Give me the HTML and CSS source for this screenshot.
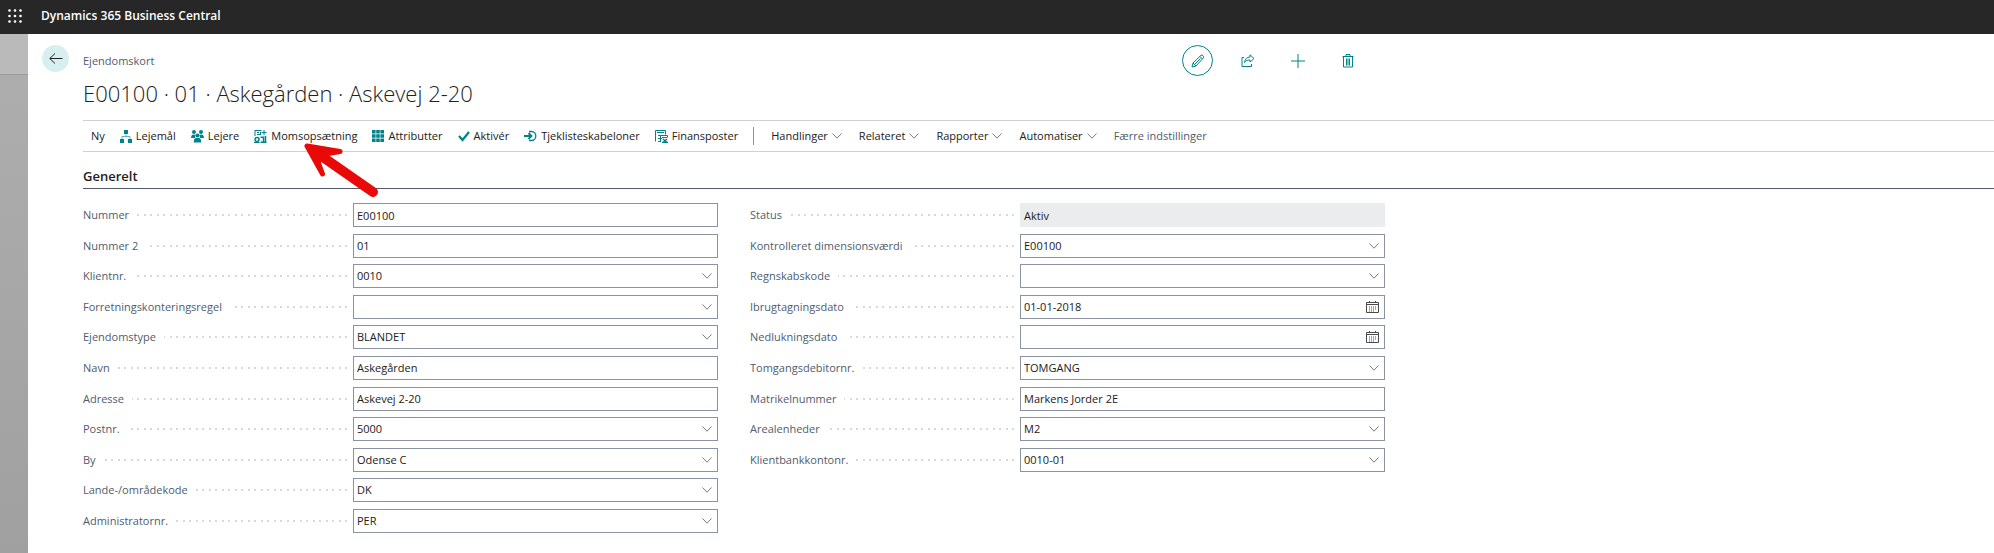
FILE: index.html
```html
<!DOCTYPE html>
<html lang="da">
   <head>
      <meta charset="UTF-8">
      <meta name="viewport" content="width=device-width, initial-scale=1.0"/>
      <title>Ejendomskort - Dynamics 365 Business Central</title>
      <link rel="stylesheet" href="styles.css">
   </head>
   <body>
      <!-- Shared icons -->
      <svg class="hidden">
         <symbol id="chevron" viewBox="0 0 10 6"><path d="M.5.5 5 5.2 9.500.5" fill="none" stroke="currentColor"/></symbol>
         <symbol id="calendar" viewBox="0 0 13 12">
            <path d="M.5 1.500h12v10H.5zM.5 3.500h12M3.500 0v2M9.500 0v2" fill="none" stroke="currentColor"/>
            <path d="M3 6h8M3 8h8M3 10h6" stroke="currentColor" stroke-dasharray="1 1" fill="none"/>
         </symbol>
      </svg>

      <header class="topbar">
         <button class="waffle" aria-label="Appstarter">
            <svg width="14" height="14" viewBox="0 0 14 14" fill="#fff">
               <circle cx="1.500" cy="1.500" r="1.300"/><circle cx="7" cy="1.500" r="1.300"/><circle cx="12.500" cy="1.500" r="1.300"/>
               <circle cx="1.500" cy="7" r="1.300"/><circle cx="7" cy="7" r="1.300"/><circle cx="12.500" cy="7" r="1.300"/>
               <circle cx="1.500" cy="12.500" r="1.300"/><circle cx="7" cy="12.500" r="1.300"/><circle cx="12.500" cy="12.500" r="1.300"/>
            </svg>
         </button>
         <span class="product">Dynamics 365 Business Central</span>
      </header>

      <main class="sheet">
         <button class="back" aria-label="Tilbage">
            <svg width="14" height="12" viewBox="0 0 14 12"><path d="M6 .5.8 5.500 6 10.500M.8 5.500H13.500" fill="none" stroke="#212121"/></svg>
         </button>

         <div class="card">
            <div class="card-head">
               <span class="caption">Ejendomskort</span>
               <div class="card-actions">
                  <button class="edit" aria-label="Rediger">
                     <svg width="14" height="14" viewBox="0 0 14 14" fill="none" stroke="currentColor">
                        <path d="M1 13l1-4L10 1.300c1-1 3.500 1.200 2.500 2.500L5 12zM2 9l3 3M9 2.500l2.500 2.500M3.500 10.500l6-6"/>
                     </svg>
                  </button>
                  <button aria-label="Del">
                     <svg width="14" height="13" viewBox="0 0 14 13" fill="none" stroke="currentColor">
                        <path d="M3 3.500H1v9h9.500V10M9 .8l4 3.700L9 8V6C6.500 6 5 6.500 3.500 8.500 4 5 6 3 9 3z"/>
                     </svg>
                  </button>
                  <button aria-label="Ny">
                     <svg width="14" height="14" viewBox="0 0 14 14" fill="none" stroke="currentColor"><path d="M7 0v14M0 7h14"/></svg>
                  </button>
                  <button aria-label="Slet">
                     <svg width="12" height="14" viewBox="0 0 12 14" fill="none" stroke="currentColor">
                        <path d="M.5 2.500h11M4 2V.5h4V2M1.500 3v10h9V3M4.500 4.500v7M6 4.500v7M7.500 4.500v7"/>
                     </svg>
                  </button>
               </div>
            </div>

            <h1>E00100 · 01 · Askegården · Askevej 2-20</h1>

            <nav class="toolbar">
               <div class="actions">
                  <button>Ny</button>
                  <button>
                     <svg width="12" height="13" viewBox="0 0 12 13" fill="currentColor"><path d="M4 0h4v4H4zM0 9h4v4H0zM8 9h4v4H8z"/><path d="M6 4v2.500M2 9V6.500h8V9" fill="none" stroke="currentColor" stroke-opacity=".6"/></svg>
                     Lejemål
                  </button>
                  <button>
                     <svg width="13" height="13" viewBox="0 0 13 13" fill="currentColor">
                        <circle cx="3" cy="2" r="2"/><circle cx="10" cy="2" r="2"/><circle cx="6.500" cy="5.500" r="2"/>
                        <path d="M0 8c0-4 3-4 4.500-3L4 8zM13 8c0-4-3-4-4.500-3L9 8zM2.800 12.500c0-5 2-4.500 3.700-4.500s3.700-.5 3.700 4.500z"/>
                     </svg>
                     Lejere
                  </button>
                  <button>
                     <svg width="13" height="13" viewBox="0 0 13 13" fill="none" stroke="currentColor">
                        <path d="M1 0v6M1 .5h6.500M3 2.500h2M3 4.500h3M6.500 2v3M10 0v5M7.500 2.500h5"/>
                        <circle cx="3" cy="9.500" r="2" stroke-width="1.500"/>
                        <path d="M0 12.500h5.500M3 7v1"/>
                        <path d="M6.500 7.200h3V12M6.500 12.200h6M11.500 6v6" stroke-width="1.500"/>
                     </svg>
                     Momsopsætning
                  </button>
                  <button>
                     <svg width="12" height="12" viewBox="0 0 12 12" fill="currentColor"><path d="M0 0h3.600v3.600H0zM4.200 0h3.600v3.600H4.200zM8.400 0H12v3.600H8.400zM0 4.200h3.600v3.600H0zM4.200 4.200h3.600v3.600H4.200zM8.400 4.200H12v3.600H8.400zM0 8.400h3.600V12H0zM4.200 8.400h3.600V12H4.200zM8.400 8.400H12V12H8.400z"/></svg>
                     Attributter
                  </button>
                  <button>
                     <svg width="12" height="12" viewBox="0 0 12 12" fill="none" stroke="currentColor" stroke-width="2.200"><path d="M1 6l3.500 4L11 2"/></svg>
                     Aktivér
                  </button>
                  <button>
                     <svg width="13" height="12" viewBox="0 0 13 12" fill="none" stroke="currentColor"><path d="M5 1.500h2.500a4.300 4.500 0 0 1 0 9H5" stroke-width="1.300"/><path d="M0 6h7M4.500 3l3 3-3 3" stroke-width="1.800"/></svg>
                     Tjeklisteskabeloner
                  </button>
                  <button>
                     <svg width="13" height="13" viewBox="0 0 13 13" fill="none" stroke="currentColor"><path d="M.5 11.500V.5h10v4M2 2.500h7M3 5.500h9.500v2M5.500 5v6M3 11.500h3M3 8.500h4M7 7.500h5"/><path d="M8 9l4 3.500M12 9l-4 3.500M7 12.500h6" stroke-width="1.500"/></svg>
                     Finansposter
                  </button>
               </div>
               <span class="divider"></span>
               <div class="menus">
                  <button>Handlinger <svg class="chevron" width="10" height="6"><use href="#chevron"/></svg></button>
                  <button>Relateret <svg class="chevron" width="10" height="6"><use href="#chevron"/></svg></button>
                  <button>Rapporter <svg class="chevron" width="10" height="6"><use href="#chevron"/></svg></button>
                  <button>Automatiser <svg class="chevron" width="10" height="6"><use href="#chevron"/></svg></button>
                  <button class="fewer">Færre indstillinger</button>
               </div>

               <!-- Marker pointing at Momsopsætning -->
               <svg class="marker" width="76" height="58" viewBox="0 0 76 58" fill="#e90909" stroke="#e90909" stroke-linejoin="round" stroke-linecap="round">
                  <path d="M3 3 36 8.500 21 11 14 19 18.500 31z" stroke-width="5"/>
                  <path d="M18 13.500 69 49" stroke-width="10"/>
               </svg>
            </nav>

            <h2>Generelt</h2>

            <form class="fields" action="">
               <div class="column">
                  <div class="field">
                     <label for="nummer">Nummer</label>
                     <div class="control"><input type="text" id="nummer" value="E00100"/></div>
                  </div>
                  <div class="field">
                     <label for="nummer2">Nummer 2</label>
                     <div class="control"><input type="text" id="nummer2" value="01"/></div>
                  </div>
                  <div class="field">
                     <label for="klientnr">Klientnr.</label>
                     <div class="control"><select id="klientnr"><option>0010</option></select><svg class="chevron" width="10" height="6"><use href="#chevron"/></svg></div>
                  </div>
                  <div class="field">
                     <label for="regel">Forretningskonteringsregel</label>
                     <div class="control"><select id="regel"><option></option></select><svg class="chevron" width="10" height="6"><use href="#chevron"/></svg></div>
                  </div>
                  <div class="field">
                     <label for="type">Ejendomstype</label>
                     <div class="control"><select id="type"><option>BLANDET</option></select><svg class="chevron" width="10" height="6"><use href="#chevron"/></svg></div>
                  </div>
                  <div class="field">
                     <label for="navn">Navn</label>
                     <div class="control"><input type="text" id="navn" value="Askegården"/></div>
                  </div>
                  <div class="field">
                     <label for="adresse">Adresse</label>
                     <div class="control"><input type="text" id="adresse" value="Askevej 2-20"/></div>
                  </div>
                  <div class="field">
                     <label for="postnr">Postnr.</label>
                     <div class="control"><select id="postnr"><option>5000</option></select><svg class="chevron" width="10" height="6"><use href="#chevron"/></svg></div>
                  </div>
                  <div class="field">
                     <label for="by">By</label>
                     <div class="control"><select id="by"><option>Odense C</option></select><svg class="chevron" width="10" height="6"><use href="#chevron"/></svg></div>
                  </div>
                  <div class="field">
                     <label for="land">Lande-/områdekode</label>
                     <div class="control"><select id="land"><option>DK</option></select><svg class="chevron" width="10" height="6"><use href="#chevron"/></svg></div>
                  </div>
                  <div class="field">
                     <label for="admin">Administratornr.</label>
                     <div class="control"><select id="admin"><option>PER</option></select><svg class="chevron" width="10" height="6"><use href="#chevron"/></svg></div>
                  </div>
               </div>

               <div class="column">
                  <div class="field">
                     <label for="status">Status</label>
                     <div class="control"><input type="text" id="status" value="Aktiv" readonly/></div>
                  </div>
                  <div class="field">
                     <label for="dimension">Kontrolleret dimensionsværdi</label>
                     <div class="control"><select id="dimension"><option>E00100</option></select><svg class="chevron" width="10" height="6"><use href="#chevron"/></svg></div>
                  </div>
                  <div class="field">
                     <label for="regnskab">Regnskabskode</label>
                     <div class="control"><select id="regnskab"><option></option></select><svg class="chevron" width="10" height="6"><use href="#chevron"/></svg></div>
                  </div>
                  <div class="field">
                     <label for="ibrug">Ibrugtagningsdato</label>
                     <div class="control"><input type="text" id="ibrug" value="01-01-2018"/><button type="button" class="pick" aria-label="Vælg dato"><svg width="13" height="12"><use href="#calendar"/></svg></button></div>
                  </div>
                  <div class="field">
                     <label for="nedluk">Nedlukningsdato</label>
                     <div class="control"><input type="text" id="nedluk"/><button type="button" class="pick" aria-label="Vælg dato"><svg width="13" height="12"><use href="#calendar"/></svg></button></div>
                  </div>
                  <div class="field">
                     <label for="tomgang">Tomgangsdebitornr.</label>
                     <div class="control"><select id="tomgang"><option>TOMGANG</option></select><svg class="chevron" width="10" height="6"><use href="#chevron"/></svg></div>
                  </div>
                  <div class="field">
                     <label for="matrikel">Matrikelnummer</label>
                     <div class="control"><input type="text" id="matrikel" value="Markens Jorder 2E"/></div>
                  </div>
                  <div class="field">
                     <label for="areal">Arealenheder</label>
                     <div class="control"><select id="areal"><option>M2</option></select><svg class="chevron" width="10" height="6"><use href="#chevron"/></svg></div>
                  </div>
                  <div class="field">
                     <label for="bank">Klientbankkontonr.</label>
                     <div class="control"><select id="bank"><option>0010-01</option></select><svg class="chevron" width="10" height="6"><use href="#chevron"/></svg></div>
                  </div>
               </div>
            </form>
         </div>
      </main>
   </body>
</html>
```
FILE: styles.css
```css
*
{
   box-sizing: border-box;
}

body
{
   display: flex;
   flex-direction: column;
   min-height: 100vh;
   margin: 0;
   background: linear-gradient(#bababa 74px, #9c9c9c 74px, #9c9c9c 75px, #adadad 75px, #a0a0a0);
   color: #212121;
   font: 11px/16px "Open Sans", "Noto Sans", sans-serif;
}

button,
input,
select
{
   margin: 0;
   color: inherit;
   font: inherit;
}

button
{
   display: flex;
   align-items: center;
   justify-content: center;
   padding: 0;
   border: 0;
   background: none;
}

.hidden
{
   display: none;
}

.topbar
{
   display: flex;
   align-items: center;
   gap: 19px;
   height: 34px;
   padding: 0 8px 2px;
   background: #272727;
   color: #fff;
}

.product
{
   font-size: 12px;
   font-weight: 600;
}

.sheet
{
   display: flex;
   flex: 1;
   align-items: flex-start;
   gap: 14px;
   margin-left: 28px;
   padding: 11px 0 16px 14px;
   background: #fff;
}

.back
{
   width: 27px;
   height: 27px;
   border-radius: 50%;
   background: #d7eff1;
}

.card
{
   flex: 1;
   min-width: 0;
}

.card-head
{
   display: flex;
   align-items: center;
   justify-content: space-between;
   max-width: 1302px;
   padding-right: 22px;
}

.caption
{
   color: #505c6d;
}

.card-actions
{
   display: flex;
   gap: 19px;
   color: #00838a;
}

.card-actions button
{
   width: 31px;
   height: 31px;
}

.card-actions .edit
{
   border: 1px solid #00838a;
   border-radius: 50%;
}

h1
{
   margin: 0;
   padding: 0 0 10px;
   font-size: 22px;
   font-weight: 300;
   line-height: 34px;
}

.toolbar
{
   position: relative;
   display: flex;
   align-items: center;
   gap: 15px;
   height: 32px;
   padding-left: 8px;
   border: solid #cdd0d4;
   border-width: 1px 0;
   white-space: nowrap;
}

.actions,
.menus
{
   display: flex;
   gap: 15px;
}

.menus
{
   gap: 17px;
   padding-left: 2px;
}

.toolbar button
{
   gap: 4px;
}

.toolbar button svg
{
   color: #00838a;
}

.divider
{
   width: 1px;
   height: 18px;
   background: #8b93a1;
}

.toolbar .fewer
{
   color: #505c6d;
}

.chevron,
.toolbar button .chevron
{
   color: #7b7b7b;
}

.marker
{
   position: absolute;
   top: 22px;
   left: 221px;
}

h2
{
   margin: 0 0 14px;
   padding: 14px 0 2px;
   border-bottom: 1px solid #505c6d;
   font-size: 13px;
   font-weight: 600;
   line-height: 20px;
}

.fields
{
   display: grid;
   grid-template-columns: repeat(2, minmax(0, 635px));
   gap: 32px;
}

.column
{
   display: grid;
   grid-template-rows: repeat(11, 24px);
   align-content: space-between;
   min-height: 330px;
}

.field
{
   display: grid;
   grid-template-columns: 270px 1fr;
}

label
{
   display: flex;
   align-items: center;
   gap: 8px;
   padding-right: 6px;
   color: #505c6d;
}

/* Dotted leader between the label and its control */
label::after
{
   content: "";
   flex: 1;
   height: 2px;
   background: repeating-linear-gradient(to left, #d8d8d8 0 2px, transparent 2px 6px, #d8d8d8 6px 8px, transparent 8px 13px);
}

.control
{
   position: relative;
}

.control input,
.control select
{
   display: block;
   width: 100%;
   height: 24px;
   padding: 0 24px 0 3px;
   border: 1px solid #8b93a1;
   border-radius: 0;
   background: #fff;
   -webkit-appearance: none;
   appearance: none;
}

.control input[readonly]
{
   border-color: #ebecee;
   background: #ebecee;
}

.control .chevron
{
   position: absolute;
   top: 9px;
   right: 6px;
   pointer-events: none;
}

.pick
{
   position: absolute;
   top: 6px;
   right: 6px;
   color: #4a4a4a;
}
```
